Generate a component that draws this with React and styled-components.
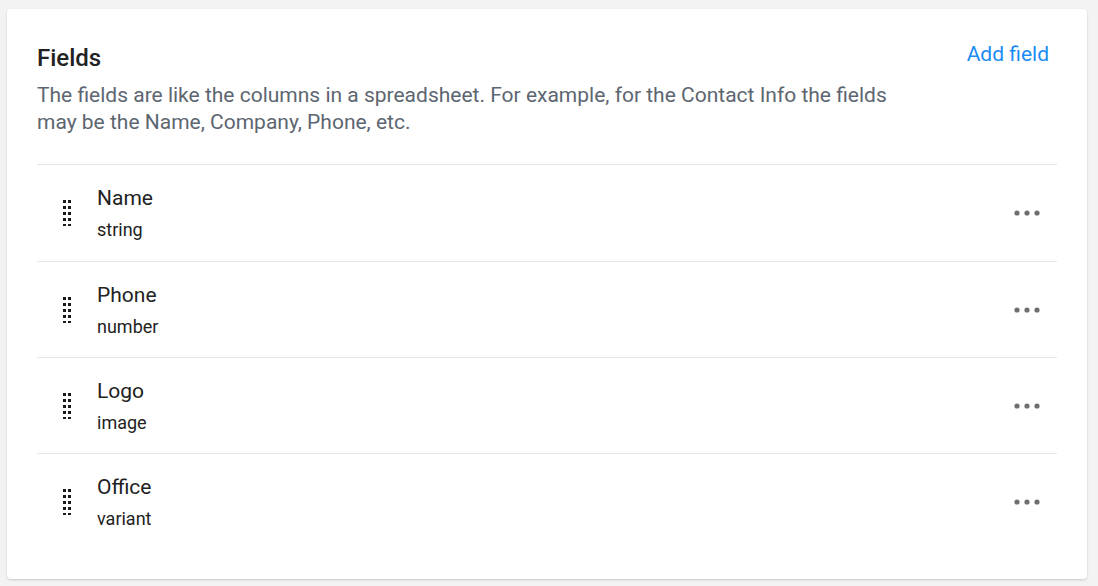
import React from "react";
import styled, { createGlobalStyle } from "styled-components";

const Global = createGlobalStyle`
  html, body { margin: 0; padding: 0; background: #f3f3f3; }
  body { font-family: Roboto, "Noto Sans", Arial, sans-serif; }
  * { box-sizing: border-box; }
`;

const Page = styled.div`
  padding: 9px 11px 7px 7px;
`;

const Card = styled.section`
  background: #fff;
  border-radius: 4px;
  box-shadow: 0 1px 3px rgba(0, 0, 0, 0.12), 0 1px 2px rgba(0, 0, 0, 0.06);
  padding: 34px 30px 30px 30px;
  height: 570px;
`;

const Header = styled.header`
  display: flex;
  justify-content: space-between;
  align-items: flex-start;
  padding-bottom: 28px;
  border-bottom: 1px solid #e6e6e6;
`;

const HeadText = styled.div`
  display: flex;
  flex-direction: column;
  gap: 9px;
  max-width: 872px;
`;

const Title = styled.h2`
  margin: 0;
  font-size: 24px;
  line-height: 30px;
  font-weight: 500;
  color: #222;
`;

const Desc = styled.p`
  margin: 0;
  font-size: 21px;
  line-height: 27px;
  color: #5d6670;
`;

const AddButton = styled.button`
  border: 0;
  background: none;
  font: inherit;
  font-size: 21px;
  line-height: 22px;
  color: #1a8cf5;
  padding: 0 8px;
  margin: 0;
  cursor: pointer;
`;

const List = styled.ul`
  list-style: none;
  margin: 0;
  padding: 0;
`;

const Row = styled.li`
  height: 96px;
  display: flex;
  align-items: center;
  padding: 0 16px 0 26px;
  border-top: ${(p) => (p.$first ? "none" : "1px solid #e6e6e6")};
`;

const Handle = styled.svg`
  flex: none;
  width: 8px;
  height: 26px;
  margin-right: 26px;
  shape-rendering: crispEdges;
`;

const Info = styled.div`
  flex: 1;
  display: flex;
  flex-direction: column;
  gap: 6px;
`;

const Name = styled.span`
  font-size: 21px;
  line-height: 28px;
  color: #222;
`;

const Type = styled.span`
  font-size: 18px;
  line-height: 24px;
  color: #222;
`;

const More = styled.svg`
  flex: none;
  width: 28px;
  height: 8px;
`;

const DragHandle = () => (
  <Handle viewBox="0 0 8 26">
    {[0, 1, 2, 3, 4].map((r) =>
      [0, 5].map((c) => (
        <rect key={`${r}-${c}`} x={c} y={r * 5.9} width="3" height="3" fill="#1a1a1a" />
      ))
    )}
  </Handle>
);

const Dots = () => (
  <More viewBox="0 0 28 8">
    <circle cx="4" cy="4" r="2.6" fill="#6e6e6e" />
    <circle cx="14" cy="4" r="2.6" fill="#6e6e6e" />
    <circle cx="24" cy="4" r="2.6" fill="#6e6e6e" />
  </More>
);

const fields = [
  { name: "Name", type: "string" },
  { name: "Phone", type: "number" },
  { name: "Logo", type: "image" },
  { name: "Office", type: "variant" },
];

export default function App() {
  return (
    <>
      <Global />
      <Page>
        <Card>
          <Header>
            <HeadText>
              <Title>Fields</Title>
              <Desc>
                The fields are like the columns in a spreadsheet. For example, for the Contact Info the fields
                may be the Name, Company, Phone, etc.
              </Desc>
            </HeadText>
            <AddButton>Add field</AddButton>
          </Header>
          <List>
            {fields.map((f, i) => (
              <Row key={f.name} $first={i === 0}>
                <DragHandle />
                <Info>
                  <Name>{f.name}</Name>
                  <Type>{f.type}</Type>
                </Info>
                <Dots />
              </Row>
            ))}
          </List>
        </Card>
      </Page>
    </>
  );
}
